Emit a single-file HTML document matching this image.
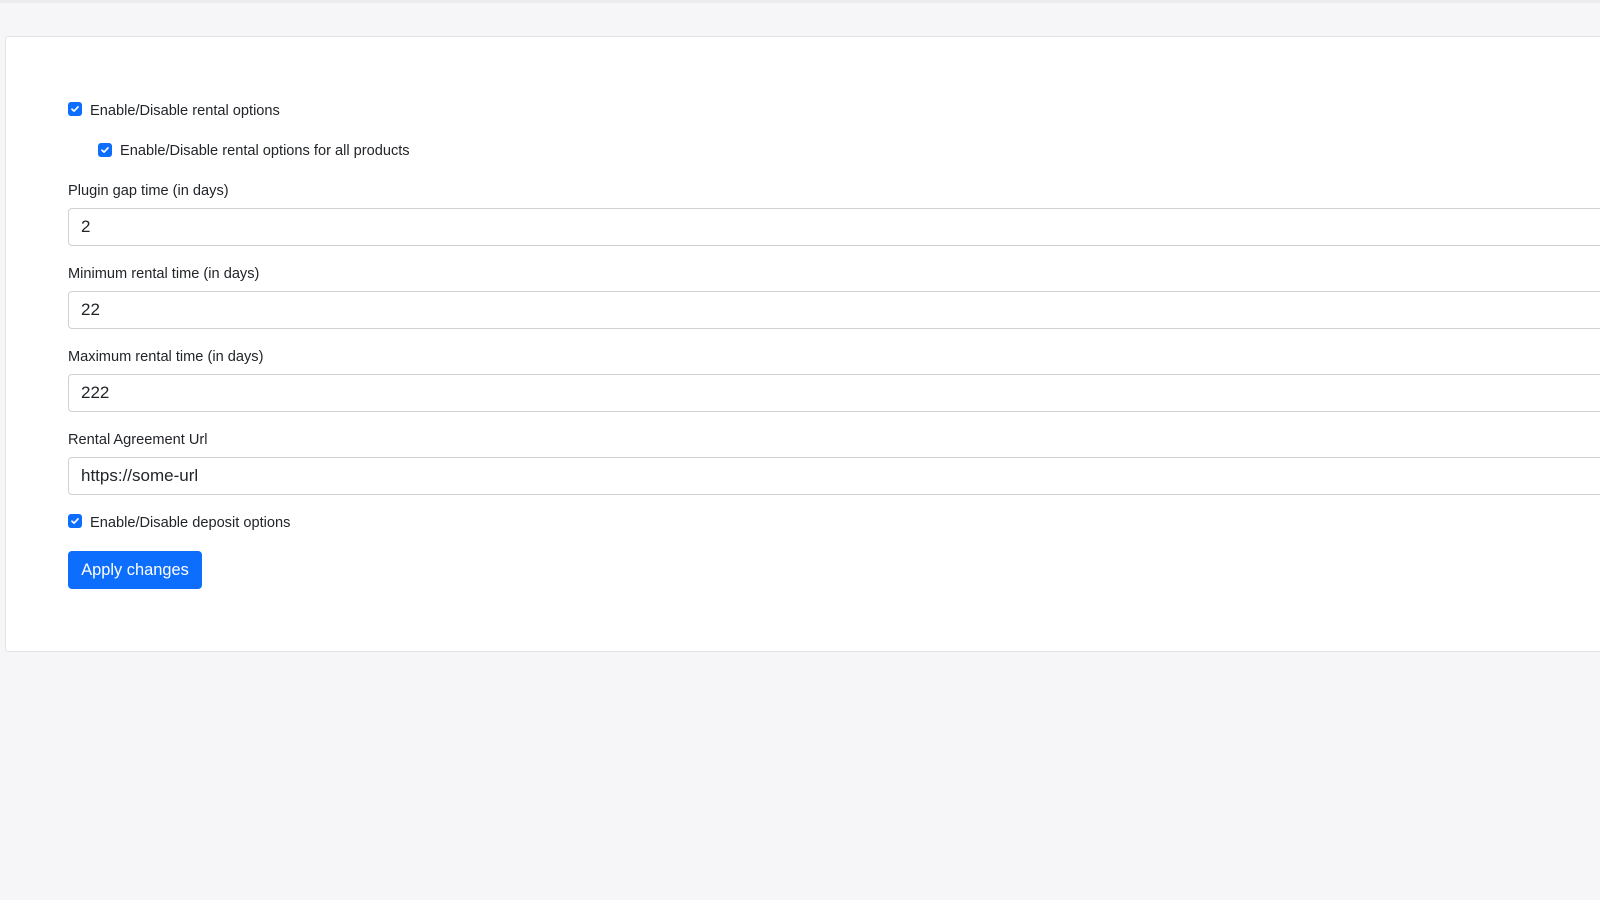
<!DOCTYPE html>
<html><head><style>
body{margin:0;background:#f6f6f8;font-family:"Liberation Sans",sans-serif;color:#212529;width:1600px;height:900px;overflow:hidden;position:relative}
.top{position:absolute;left:0;top:0;width:1600px;height:3px;background:#ececef}
.card{position:absolute;left:5px;top:36px;width:1620px;height:616px;background:#fff;border:1px solid #e3e3e6;border-radius:3px;box-sizing:border-box}
.cb{position:absolute;width:14px;height:14px;background:#0d6efd;border-radius:3px}
.cb svg{position:absolute;left:2px;top:2px}
.lbl{position:absolute;font-size:14.6px;line-height:20px;white-space:nowrap}
.inp{position:absolute;left:68px;width:1560px;height:36px;border:1px solid #cfd1d4;border-radius:4px;font-size:17px;line-height:36px;padding-left:12px}
.btn{position:absolute;left:68px;top:551px;width:134px;height:38px;background:#0d6efd;border-radius:4px;color:#fff;font-size:16.4px;line-height:38px;text-align:center}
</style></head><body>
<div class="top"></div>
<div class="card"></div>
<div class="cb" style="left:68px;top:102px"><svg width="10" height="10" viewBox="0 0 10 10"><path d="M2 5.2L4.1 7.1L8 2.9" stroke="#fff" stroke-width="1.7" fill="none" stroke-linecap="round" stroke-linejoin="round"/></svg></div>
<div class="lbl" style="left:90px;top:101px">Enable/Disable rental options</div>
<div class="cb" style="left:98px;top:143px"><svg width="10" height="10" viewBox="0 0 10 10"><path d="M2 5.2L4.1 7.1L8 2.9" stroke="#fff" stroke-width="1.7" fill="none" stroke-linecap="round" stroke-linejoin="round"/></svg></div>
<div class="lbl" style="left:120px;top:141px">Enable/Disable rental options for all products</div>
<div class="lbl" style="left:68px;top:181px">Plugin gap time (in days)</div>
<div class="inp" style="top:208px">2</div>
<div class="lbl" style="left:68px;top:264px">Minimum rental time (in days)</div>
<div class="inp" style="top:291px">22</div>
<div class="lbl" style="left:68px;top:347px">Maximum rental time (in days)</div>
<div class="inp" style="top:374px">222</div>
<div class="lbl" style="left:68px;top:430px">Rental Agreement Url</div>
<div class="inp" style="top:457px">https://some-url</div>
<div class="cb" style="left:68px;top:514px"><svg width="10" height="10" viewBox="0 0 10 10"><path d="M2 5.2L4.1 7.1L8 2.9" stroke="#fff" stroke-width="1.7" fill="none" stroke-linecap="round" stroke-linejoin="round"/></svg></div>
<div class="lbl" style="left:90px;top:513px">Enable/Disable deposit options</div>
<div class="btn">Apply changes</div>
</body></html>
